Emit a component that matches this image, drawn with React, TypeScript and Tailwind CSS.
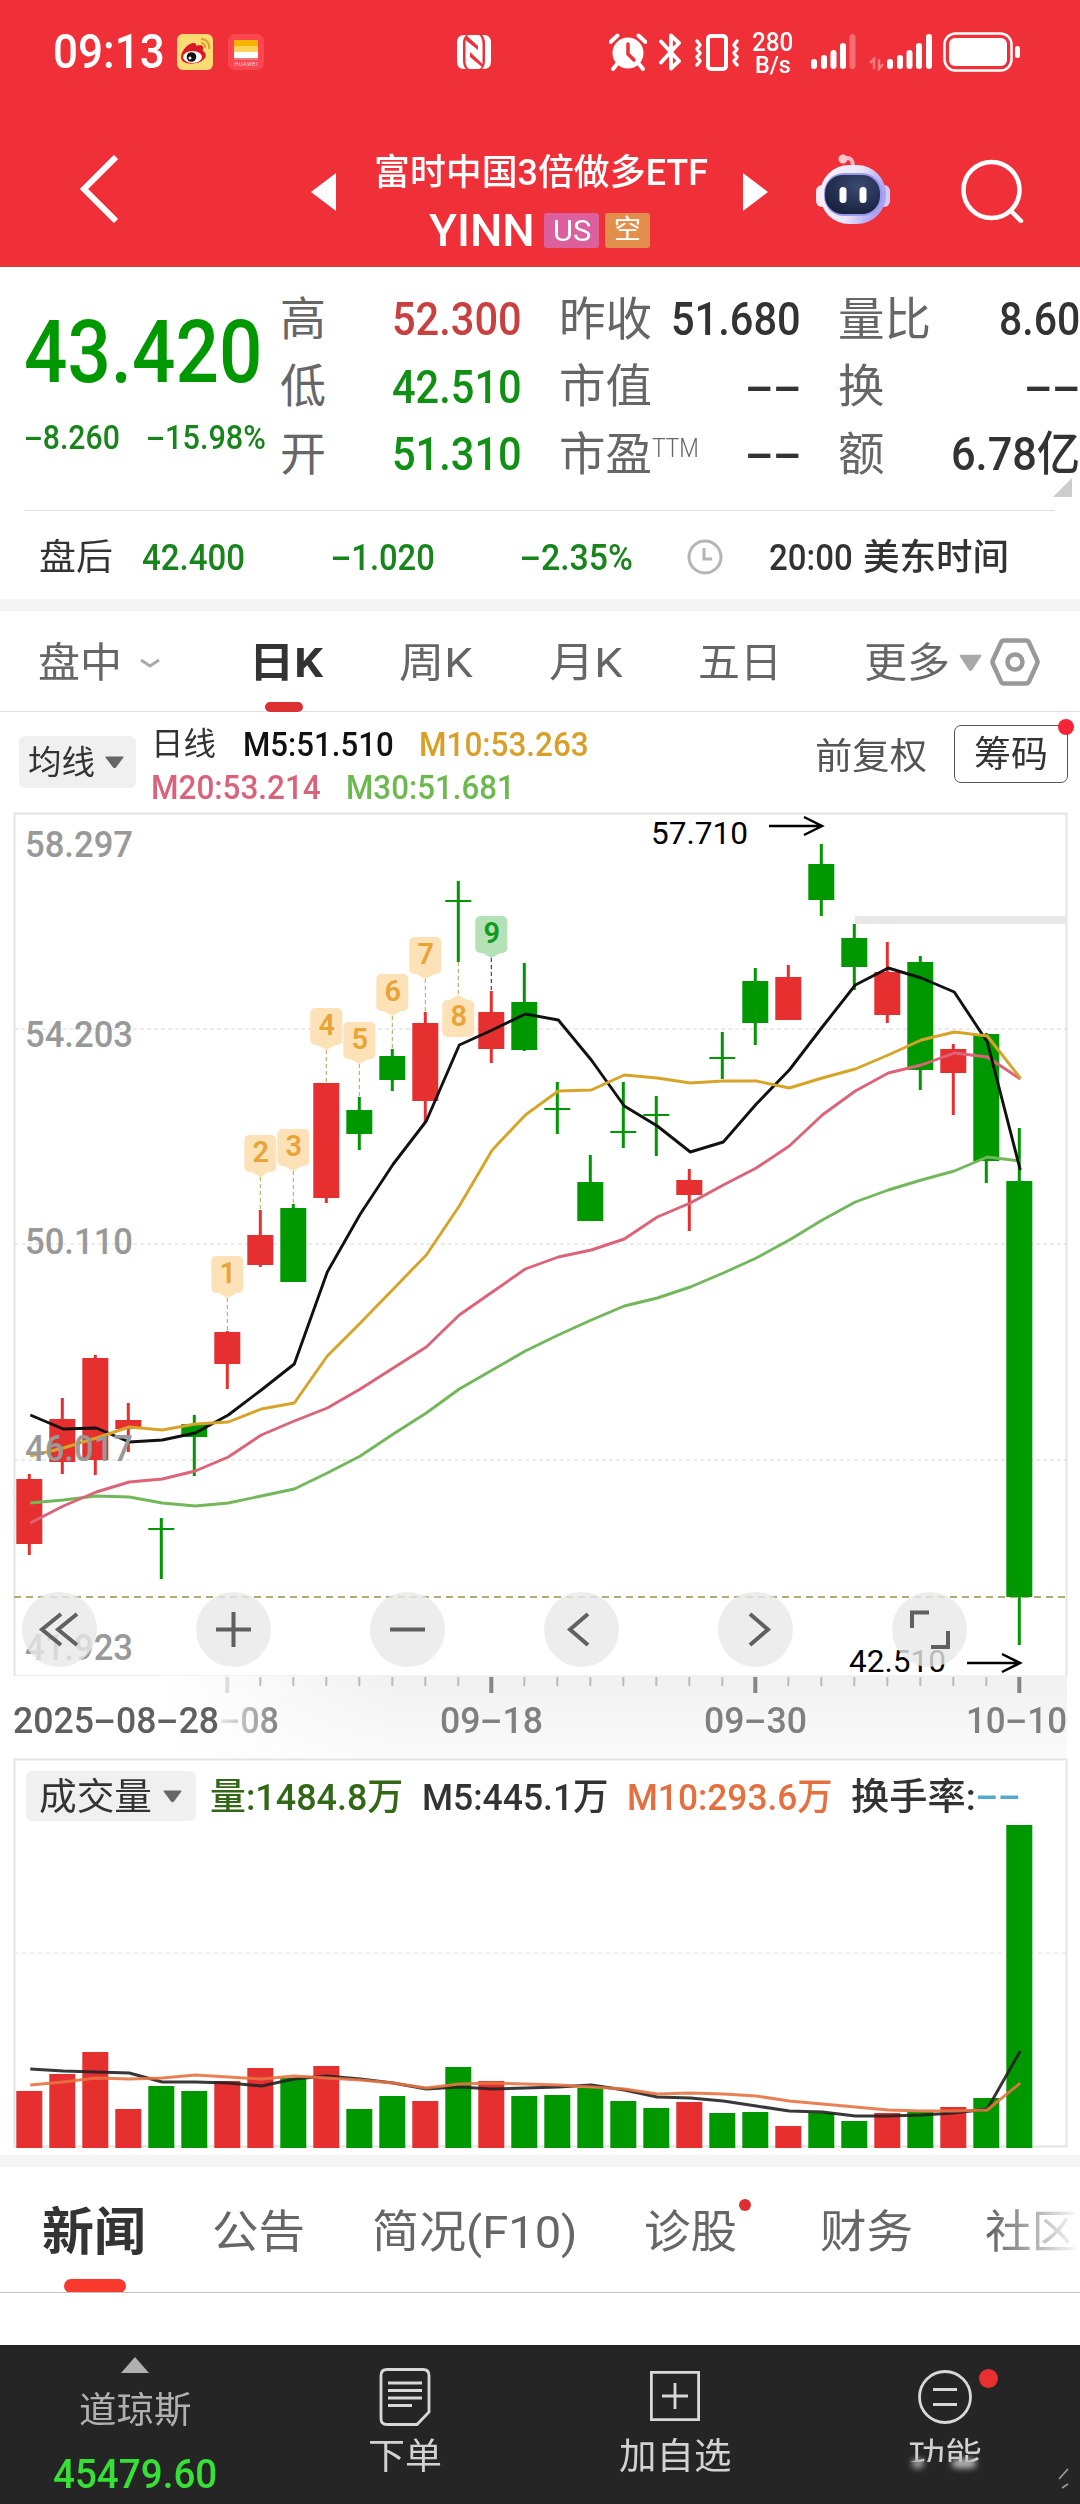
import React, { useLayoutEffect, useRef, useState } from "react";

type Candle = [number, number, number, number, "r" | "g"];

const RED = "#e63030";
const GREEN = "#009800";
const STEP = 33;
const BODY = 26;

// wick top, body top, body bottom, wick bottom (chart space, top of the frame = 0)
const candles: Candle[] = [
  [661, 666, 731, 742, "r"],
  [585, 606, 649, 661, "r"],
  [542, 545, 647, 662, "r"],
  [590, 607, 616, 639, "r"],
  [705, 715, 717, 766, "g"],
  [602, 611, 624, 663, "g"],
  [518, 519, 551, 576, "r"],
  [397, 422, 452, 454, "r"],
  [391, 395, 469, 469, "g"],
  [270, 270, 385, 390, "r"],
  [284, 297, 321, 337, "g"],
  [236, 243, 267, 278, "g"],
  [199, 210, 288, 309, "r"],
  [68, 87, 89, 149, "g"],
  [178, 199, 236, 250, "r"],
  [150, 189, 237, 238, "g"],
  [269, 295, 297, 321, "g"],
  [342, 369, 408, 408, "g"],
  [269, 318, 320, 335, "g"],
  [283, 301, 303, 343, "g"],
  [356, 367, 382, 418, "r"],
  [219, 244, 246, 266, "g"],
  [155, 168, 210, 232, "g"],
  [152, 164, 207, 207, "r"],
  [31, 51, 87, 103, "g"],
  [111, 125, 154, 177, "g"],
  [129, 159, 202, 210, "r"],
  [143, 149, 257, 277, "g"],
  [231, 236, 260, 302, "r"],
  [220, 221, 348, 370, "g"],
  [315, 368, 784, 832, "g"],
];

const ma5 = [602, 616, 615, 629, 627, 620, 602, 577, 551, 459, 401, 351, 308, 232, 217, 201, 207, 247, 293, 313, 339, 329, 291, 257, 214, 172, 155, 165, 179, 229, 357];
const ma10 = [643, 635, 625, 614, 617, 611, 609, 596, 590, 543, 510, 476, 442, 393, 337, 302, 278, 277, 262, 265, 270, 268, 268, 275, 265, 256, 242, 227, 219, 223, 265];
const ma20 = [710, 693, 679, 669, 666, 658, 644, 622, 608, 595, 576, 555, 534, 502, 479, 456, 444, 437, 426, 404, 390, 372, 355, 333, 302, 278, 260, 252, 240, 244, 266];
const ma30 = [690, 687, 683, 684, 690, 693, 690, 683, 676, 660, 643, 621, 600, 576, 557, 538, 522, 507, 493, 485, 474, 460, 445, 427, 407, 389, 377, 367, 358, 344, 348];

const volumes = [57, 74, 96, 39, 62, 57, 67, 80, 70, 82, 39, 52, 47, 81, 67, 52, 53, 60, 47, 40, 46, 35, 36, 22, 35, 27, 35, 36, 41, 50, 323];
const vma5 = [310, 312, 313, 314, 323, 323, 324, 327, 320, 317, 320, 324, 330, 328, 330, 329, 328, 326, 331, 338, 339, 342, 347, 352, 353, 357, 357, 356, 354, 350, 292];
const vma10 = [326, 323, 319, 320, 319, 316, 318, 320, 317, 319, 321, 324, 329, 325, 324, 325, 326, 328, 330, 335, 334, 335, 337, 342, 345, 348, 351, 352, 352, 351, 324];

// candle index, label top
const marks: [number, number][] = [
  [6, 443],
  [7, 322],
  [8, 316],
  [9, 195],
  [10, 209],
  [11, 161],
  [12, 124],
  [13, 182],
  [14, 103],
];

const cx = (i: number) => 15.3 + i * STEP;
const points = (ys: number[]) => ys.map((y, i) => `${cx(i) + 1},${y}`).join(" ");

const withDashes = (text: string) =>
  text.split(/(-)/).map((part, i) =>
    part === "-" ? (
      <span key={i} className="inline-block w-[0.62em] text-center">
        <span className="inline-block scale-x-[1.9]">-</span>
      </span>
    ) : (
      part
    )
  );

interface FitProps {
  text: string;
  w: number;
  className?: string;
}

// squeezes a line of text into a fixed width
const Fit = ({ text, w, className = "" }: FitProps) => {
  const ref = useRef<HTMLSpanElement>(null);
  const [scale, setScale] = useState(1);

  useLayoutEffect(() => {
    if (ref.current) setScale(w / ref.current.offsetWidth);
  }, [w, text]);

  return (
    <span className={`block shrink-0 whitespace-nowrap leading-none ${className}`} style={{ width: w }}>
      <span ref={ref} className="inline-block origin-left" style={{ transform: `scaleX(${scale})` }}>
        {withDashes(text)}
      </span>
    </span>
  );
};

const Caret = ({ className = "" }: { className?: string }) => (
  <svg viewBox="0 0 20 13" className={`shrink-0 ${className}`} preserveAspectRatio="none">
    <path d="M1 0.5H19Q20 1 19 2L11.5 11.5Q10 13 8.500 11.500L1 2Q0 1 1 0.500Z" fill="currentColor" />
  </svg>
);

const StatusBar = () => (
  <div className="flex h-[104px] items-center text-white">
    <Fit text="09:13" w={112} className="ml-[53px] text-[48px] font-medium" />
    <svg viewBox="0 0 36 36" className="ml-[12px] size-[36px]">
      <rect width="36" height="36" rx="6" fill="#fbdc74" />
      <path d="M4 23c0-6 7-14 13-14 3 0 2 3 2 3s6-2 7 1c1 2-1 3 0 4 3 2 4 5 1 8-5 6-23 7-23-2z" fill="#d8191f" />
      <ellipse cx="15.500" cy="23" rx="9.500" ry="6" fill="#fff" />
      <circle cx="14.500" cy="23" r="4.800" fill="#111" />
      <circle cx="13" cy="24" r="1.500" fill="#fff" />
      <path d="M24 5a8 8 0 0 1 8 10M24 9a4 4 0 0 1 4 5" fill="none" stroke="#e0a02c" strokeWidth="2" />
    </svg>
    <svg viewBox="0 0 36 36" className="ml-[15px] size-[36px]">
      <rect width="36" height="36" rx="7" fill="#fb4650" />
      <rect x="6" y="6" width="24" height="6" fill="#f7b500" />
      <rect x="6" y="12" width="24" height="6" fill="#ffd25c" />
      <rect x="6" y="18" width="24" height="6" fill="#fff" />
      <rect x="6" y="24" width="24" height="2" fill="#e27a80" />
      <text x="6.500" y="32" fontSize="5.500" textLength="23" fill="#ffd9db">HUAWEI</text>
    </svg>
    <svg viewBox="0 0 34 34" className="ml-[193px] size-[34px]" fill="#fff">
      <path d="M9 0H7Q0 0 0 8V26Q0 34 7 34H9Q6 31 6 26V8Q6 3 9 0Z" />
      <path d="M25 34H27Q34 34 34 26V8Q34 0 27 0H25Q28 3 28 8V26Q28 31 25 34Z" />
      <path d="M8.500 5V27Q9 32 12 34H22Q24 33 25 32L13 22V17L25.500 29V8Q25 2 22 0H12Q11 0 10 1L21 11V15Z" />
    </svg>
    <svg viewBox="0 0 38 38" className="ml-[118px] size-[38px]">
      <circle cx="19" cy="20" r="15.500" fill="#fff" />
      <path d="M1.500 9L8.500 2.500M36.500 9L29.500 2.500M8 31L4 36M30 31L34 36" stroke="#fff" strokeWidth="4" strokeLinecap="round" />
      <path d="M19 11V21L25 27" fill="none" stroke="#f03038" strokeWidth="3.500" strokeLinecap="round" />
    </svg>
    <svg viewBox="0 0 22 38" className="ml-[12px] h-[38px] w-[22px]" fill="none" stroke="#fff" strokeWidth="3.800" strokeLinejoin="round" strokeLinecap="round">
      <path d="M2 8.500L20 28L12 35.500V2.500L20 10L2 29.500" />
    </svg>
    <svg viewBox="0 0 46 38" className="ml-[13px] h-[38px] w-[46px]" fill="none" stroke="#fff" strokeWidth="4" strokeLinecap="round" strokeLinejoin="round">
      <rect x="14" y="3" width="18" height="33" rx="3" />
      <path d="M3 8L6 12L3 16L6 20L3 24L6 28L3 32M43 8L40 12L43 16L40 20L43 24L40 28L43 32" strokeWidth="3.500" />
    </svg>
    <div className="ml-[12px] flex flex-col items-center gap-px font-medium">
      <Fit text="280" w={41} className="h-[23px] text-[26px] leading-[23px]" />
      <Fit text="B/s" w={36} className="h-[22px] text-[24px] leading-[22px]" />
    </div>
    <svg viewBox="0 0 46 38" className="ml-[18px] h-[38px] w-[46px]" stroke="#fff" strokeWidth="6" strokeLinecap="round">
      <path d="M3 29V33M13 25V33M22.500 20V33M32 13V33" />
      <path d="M41.500 4V33" opacity=".3" />
    </svg>
    <svg viewBox="0 0 66 38" className="ml-[11px] h-[38px] w-[66px]" stroke="#fff" strokeWidth="6" strokeLinecap="round">
      <path d="M2 30L6 26V36M11 26V36L15 31" fill="none" strokeWidth="2.500" strokeLinecap="butt" opacity=".35" />
      <path d="M22 29V33M32 25V33M41.500 20V33M51 13V33M61 4V33" />
    </svg>
    <svg viewBox="0 0 78 42" className="ml-[9px] h-[42px] w-[78px]">
      <rect x="1.500" y="2.500" width="67" height="37" rx="11" fill="none" stroke="#fff" strokeWidth="2.500" />
      <rect x="6" y="7" width="58" height="28" rx="6" fill="#fff" />
      <rect x="72" y="15" width="5" height="12" rx="2.500" fill="#fff" />
    </svg>
  </div>
);

const TitleBar = () => (
  <div className="flex h-[163px] items-center text-white">
    <svg viewBox="0 0 40 68" className="ml-[78px] mt-[6px] h-[68px] w-[40px]" fill="none" stroke="#fff" strokeWidth="6">
      <path d="M38 2L6 34L38 66" />
    </svg>
    <svg viewBox="0 0 25 38" className="ml-[193px] mt-[13px] h-[38px] w-[25px]" fill="#fff">
      <path d="M25 0V38L0 19Z" />
    </svg>
    <div className="ml-[37px] mt-[36px] flex w-[336px] flex-col items-center gap-[18px]">
      <Fit text="富时中国3倍做多ETF" w={334} className="text-[36px] font-medium" />
      <div className="-ml-[3px] flex items-center gap-[6px]">
        <Fit text="YINN" w={106} className="mr-[3px] text-[44px] font-medium" />
        <div className="flex h-[35px] w-[55px] items-center justify-center rounded-[3px] bg-[#dc5f9e]">
          <Fit text="US" w={38} className="text-[30px]" />
        </div>
        <div className="flex h-[35px] w-[45px] items-center justify-center rounded-[3px] bg-[#e28f4c] text-[27px] leading-none">
          空
        </div>
      </div>
    </div>
    <svg viewBox="0 0 25 38" className="ml-[34px] mt-[13px] h-[38px] w-[25px]" fill="#fff">
      <path d="M0 0V38L25 19Z" />
    </svg>
    <svg viewBox="0 0 76 72" className="ml-[47px] mt-[7px] h-[72px] w-[76px]">
      <defs>
        <linearGradient id="shell" x1="0" y1="0" x2="1" y2="0.3">
          <stop offset="0" stopColor="#fdf1f6" />
          <stop offset="0.600" stopColor="#e9e6fb" />
          <stop offset="1" stopColor="#a9a2f0" />
        </linearGradient>
        <radialGradient id="visor" cx="0.6" cy="0.3" r="0.7">
          <stop offset="0" stopColor="#3c4a72" />
          <stop offset="1" stopColor="#18233f" />
        </radialGradient>
      </defs>
      <path d="M28 6Q38 2 38 14" fill="none" stroke="#f7b5c4" strokeWidth="4" />
      <circle cx="28" cy="6" r="4.500" fill="#f9c6d0" />
      <rect x="1" y="32" width="12" height="22" rx="6" fill="#fbe9f0" />
      <rect x="63" y="32" width="12" height="22" rx="6" fill="#cfcdf8" />
      <rect x="5" y="12" width="66" height="59" rx="29" fill="url(#shell)" />
      <rect x="9" y="20" width="58" height="43" rx="20" fill="#9a98ee" />
      <rect x="10" y="22" width="55" height="39" rx="18" fill="url(#visor)" />
      <rect x="24.500" y="34" width="7" height="16" rx="3.500" fill="#fff" />
      <rect x="44.500" y="34" width="7" height="16" rx="3.500" fill="#fff" />
    </svg>
    <svg viewBox="0 0 64 64" className="ml-[70px] mt-[11px] size-[64px]" fill="none" stroke="#fff" strokeWidth="4.500" strokeLinecap="round">
      <circle cx="30.500" cy="31" r="28" />
      <path d="M50 52L60 62" />
    </svg>
  </div>
);

const quoteRows = [
  { a: "高", av: "52.300", up: true, b: "昨收", bv: "51.680", c: "量比", cv: "8.60", cw: 81 },
  { a: "低", av: "42.510", up: false, b: "市值", bv: "--", c: "换", cv: "--", cw: 56 },
  { a: "开", av: "51.310", up: false, b: "市盈", bv: "--", c: "额", cv: "6.78亿", cw: 129 },
];

const Quote = () => (
  <div className="relative flex h-[244px] text-[#333]">
    <div className="w-[280px] shrink-0 pl-[24px] text-[#009800]">
      <Fit text="43.420" w={238} className="mt-[42px] text-[87px] font-medium" />
      <div className="mt-[24px] flex text-[34px] text-[#17851b]">
        <Fit text="-8.260" w={96} className="font-medium" />
        <Fit text="-15.98%" w={120} className="ml-[26px] font-medium" />
      </div>
    </div>
    <div className="mt-[18px] flex w-[800px] flex-col">
      {quoteRows.map((row) => (
        <div key={row.a} className="flex h-[67.5px] items-center text-[47px]">
          <span className="w-[112px] shrink-0 text-[46px] leading-none text-[#666]">{row.a}</span>
          <Fit
            text={row.av}
            w={130}
            className={row.up ? "text-[#c84040] font-medium" : "text-[#109015] font-medium"}
          />
          <div className="ml-[37px] flex w-[145px] shrink-0 items-center">
            <Fit text={row.b} w={93} className="text-[46px] text-[#666]" />
            {row.b === "市盈" && <Fit text="TTM" w={47} className="-mt-[11px] text-[25px] font-light text-[#666]" />}
          </div>
          <div className="-ml-[33px] flex w-[130px] shrink-0 justify-end">
            <Fit text={row.bv} w={row.bv === "--" ? 56 : 130} className="font-medium" />
          </div>
          <Fit text={row.c} w={row.c.length * 46.5} className="ml-[37px] text-[46px] text-[#666]" />
          <div className="ml-auto flex w-[140px] justify-end">
            <Fit text={row.cv} w={row.cw} className="font-medium" />
          </div>
        </div>
      ))}
    </div>
    <svg viewBox="0 0 19 19" className="absolute bottom-[14px] right-[8px] size-[19px]" fill="#ccc">
      <path d="M19 0V19H0Z" />
    </svg>
    <div className="absolute bottom-0 left-[24px] h-px w-[1031px] bg-[#e2e2e2]" />
  </div>
);

const AfterHours = () => (
  <div className="flex h-[88px] items-center pt-[6px] text-[36.5px] text-[#17851b]">
    <Fit text="盘后" w={74} className="ml-[39px] text-[36px] text-[#333]" />
    <Fit text="42.400" w={103} className="ml-[29px] font-medium" />
    <Fit text="-1.020" w={104} className="ml-[86px] font-medium" />
    <Fit text="-2.35%" w={113} className="ml-[85px] font-medium" />
    <svg viewBox="0 0 36 36" className="ml-[54px] -mt-[3px] size-[36px]" fill="none" stroke="#b5b5b5" strokeWidth="3">
      <circle cx="18" cy="18" r="16" />
      <path d="M17 9V20H25" />
    </svg>
    <Fit text="20:00" w={84} className="ml-[46px] font-medium text-[#333]" />
    <Fit text="美东时间" w={146} className="ml-[10px] text-[36px] font-medium text-[#333]" />
  </div>
);

const PeriodTabs = () => (
  <div className="relative flex h-[101px] items-center border-b border-[#e0e0e0] pt-[4px] text-[41px] text-[#666]">
    <Fit text="盘中" w={84} className="ml-[38px]" />
    <svg viewBox="0 0 20 11" className="ml-[18px] h-[11px] w-[20px]" fill="none" stroke="#aaa" strokeWidth="3">
      <path d="M1 2L10 8L19 2" />
    </svg>
    <Fit text="日K" w={74} className="ml-[89px] font-bold text-[#333]" />
    <Fit text="周K" w={74} className="ml-[76px]" />
    <Fit text="月K" w={74} className="ml-[76px]" />
    <Fit text="五日" w={84} className="ml-[75px]" />
    <Fit text="更多" w={86} className="ml-[82px]" />
    <Caret className="ml-[9px] h-[18px] w-[23px] text-[#a9a9a9]" />
    <svg viewBox="0 0 50 48" className="ml-[8px] -mt-[3px] h-[48px] w-[50px]" fill="none" stroke="#999" strokeWidth="4.500" strokeLinejoin="round">
      <path d="M14 2.500H36Q38 2.500 39 4.500L47 22Q48 24 47 26L39 43.500Q38 45.500 36 45.500H14Q12 45.500 11 43.500L3 26Q2 24 3 22L11 4.500Q12 2.500 14 2.500Z" />
      <circle cx="25" cy="24" r="7.500" />
    </svg>
    <div className="absolute bottom-[-1px] left-[265px] h-[10px] w-[38px] rounded-full bg-[#dc3030]" />
  </div>
);

const Averages = () => (
  <div className="flex h-[101px]">
    <div className="ml-[19px] mt-[24px] flex h-[52px] w-[117px] items-center rounded-[6px] bg-[#f0f0f0] text-[33px] text-[#333]">
      <Fit text="均线" w={67} className="ml-[9px]" />
      <Caret className="ml-[10px] h-[13px] w-[19px] text-[#666]" />
    </div>
    <div className="ml-[15px] mt-[16px] w-[640px] text-[33.5px]">
      <div className="flex">
        <Fit text="日线" w={65} className="text-[32px] text-[#333]" />
        <Fit text="M5:51.510" w={151} className="ml-[27px] font-medium text-[#111]" />
        <Fit text="M10:53.263" w={170} className="ml-[25px] font-medium text-[#d99f26]" />
      </div>
      <div className="mt-[9px] flex">
        <Fit text="M20:53.214" w={170} className="font-medium text-[#d9637a]" />
        <Fit text="M30:51.681" w={169} className="ml-[25px] font-medium text-[#6cb94f]" />
      </div>
    </div>
    <Fit text="前复权" w={112} className="ml-[24px] mt-[27px] text-[36px] text-[#555]" />
    <div className="relative ml-[27px] mt-[13px] flex h-[58px] w-[114px] items-center justify-center rounded-[7px] border border-[#555] text-[36px] text-[#333]">
      <Fit text="筹码" w={74} className="mt-[2px]" />
      <span className="absolute -right-[7px] -top-[7px] size-[16px] rounded-full bg-[#f52439]" />
    </div>
  </div>
);

const Arrow = ({ x, y }: { x: number; y: number }) => (
  <path d={`M${x} ${y}H${x + 52}M${x + 35} ${y - 9}L${x + 53} ${y}L${x + 35} ${y + 9}`} fill="none" stroke="#000" strokeWidth="2.5" />
);

const controls = [
  "M39 22L20 37.500L39 53M55 22L36 37.500L55 53",
  "M37.500 20V55M20 37.500H55",
  "M20 37.500H55",
  "M44 22L26 37.500L44 53",
  "M32 22L50 37.500L32 53",
  "M20 36V20.500H37M56 39V55H39",
];

const KChart = () => (
  <div className="relative ml-[14px] h-[863px] w-[1053px]">
    <svg viewBox="0 0 1053 863" className="h-full w-full overflow-visible">
      <rect x="0.500" y="0.500" width="1052" height="863" fill="none" stroke="#e4e4e4" strokeWidth="2" />
      {[216, 431, 647].map((y) => (
        <path key={y} d={`M0 ${y}H1053`} stroke="#d8d8d8" strokeWidth="1" strokeDasharray="4 3" />
      ))}
      <path d="M0 784H1053" stroke="#b3aa78" strokeWidth="2" strokeDasharray="7 5" />
      <rect x="841" y="103" width="212" height="8" fill="#e8e8e8" />

      {candles.map(([wt, bt, bb, wb, tone], i) => {
        const fill = tone === "r" ? RED : GREEN;
        return (
          <g key={i} fill={fill}>
            <rect x={cx(i) - 1.5} y={wt} width="3" height={wb - wt} />
            <rect x={cx(i) - BODY / 2} y={bt} width={BODY} height={bb - bt} />
          </g>
        );
      })}

      <g fill="none" strokeWidth="2.900" strokeLinejoin="round">
        <polyline points={points(ma30)} stroke="#72b85a" />
        <polyline points={points(ma20)} stroke="#dc6378" />
        <polyline points={points(ma5)} stroke="#111" />
        <polyline points={points(ma10)} stroke="#d8a428" />
      </g>

      {marks.map(([i, top], n) => {
        const x = cx(i);
        const last = n === 8;
        const flipped = n === 7;
        const tone = last ? "#109a20" : "#e8a437";
        return (
          <g key={i}>
            <path
              d={flipped ? `M${x} ${candles[i][3]}V${top}` : `M${x} ${top + 42}V${candles[i][0]}`}
              stroke={last ? "#222" : "#b8a050"}
              strokeDasharray="4 3"
            />
            <g fill={last ? "#b4e1b6" : "#fde2b8"}>
              <rect x={x - 16} y={flipped ? top + 5 : top} width="32" height="37" rx="5" />
              <path d={flipped ? `M${x - 9} ${top + 5}L${x} ${top}L${x + 9} ${top + 5}Z` : `M${x - 9} ${top + 37}L${x} ${top + 42}L${x + 9} ${top + 37}Z`} />
            </g>
            <text x={x + 0.5} y={flipped ? top + 31 : top + 27} textAnchor="middle" fontSize="29" fontWeight="600" fill={tone}>
              {n + 1}
            </text>
          </g>
        );
      })}

      <g fontSize="37" fontWeight="500" fill="#999">
        <text x="11" y="43.500" textLength="108" lengthAdjust="spacingAndGlyphs">58.297</text>
        <text x="11" y="234" textLength="108" lengthAdjust="spacingAndGlyphs">54.203</text>
        <text x="11" y="441" textLength="108" lengthAdjust="spacingAndGlyphs">50.110</text>
        <text x="11" y="648" textLength="108" lengthAdjust="spacingAndGlyphs">46.017</text>
        <text x="11" y="847" textLength="108" lengthAdjust="spacingAndGlyphs">41.923</text>
      </g>
      <g fontSize="31" fill="#000">
        <text x="637" y="31" textLength="97" lengthAdjust="spacingAndGlyphs">57.710</text>
        <text x="835" y="859" textLength="97" lengthAdjust="spacingAndGlyphs">42.510</text>
      </g>
      <Arrow x={755} y={13} />
      <Arrow x={953} y={850} />
    </svg>
    <div className="absolute bottom-[9px] left-[8px] flex gap-[99px]">
      {controls.map((d) => (
        <button key={d} className="size-[75px] rounded-full bg-[#e9e9e9]/80">
          <svg viewBox="0 0 75 75" fill="none" stroke="#606060" strokeWidth="4">
            <path d={d} />
          </svg>
        </button>
      ))}
    </div>
  </div>
);

const TimeAxis = () => (
  <div className="relative h-[83px] bg-linear-to-b from-[#f1f1f1] to-[#fbfbfb]">
    <div className="absolute inset-y-0 left-0 w-[400px] bg-linear-to-r from-white from-40% to-transparent" />
    <div className="absolute inset-y-0 right-0 w-[13px] bg-white" />
    <svg viewBox="0 0 1080 20" className="relative block h-[20px] w-full">
      {candles.map((_, i) => {
        if (i < 6) return null;
        const major = (i - 6) % 8 === 0;
        return (
          <rect
            key={i}
            x={cx(i) + 14 - (major ? 2 : 1)}
            y="1"
            width={major ? 4 : 2}
            height={major ? 16 : 9}
            fill={i === 6 ? "#ddd" : major ? "#858585" : "#bbb"}
          />
        );
      })}
    </svg>
    <div className="relative mt-[6px] flex text-[37px] font-medium text-[#808080]">
      <Fit text="2025-08-28" w={206} className="ml-[13px] text-[#606060]" />
      <Fit text="-08" w={60} className="mask-[linear-gradient(to_right,rgba(0,0,0,0.15),black)]" />
      <Fit text="09-18" w={103} className="ml-[161px]" />
      <Fit text="09-30" w={103} className="ml-[161px]" />
      <Fit text="10-10" w={101} className="ml-[159px]" />
    </div>
  </div>
);

const Volume = () => (
  <div className="relative ml-[14px] h-[389px] w-[1053px]">
    <svg viewBox="0 0 1053 389" className="absolute inset-0 h-full w-full overflow-visible">
      <rect x="0.500" y="0.500" width="1052" height="387" fill="none" stroke="#e4e4e4" strokeWidth="2" />
      <path d="M0 194H1053" stroke="#e2e2e2" strokeDasharray="4 4" />
      {volumes.map((v, i) => (
        <rect key={i} x={cx(i) - BODY / 2} y={389 - v} width={BODY} height={v} fill={candles[i][4] === "r" ? RED : GREEN} />
      ))}
      <g fill="none" strokeWidth="3" strokeLinejoin="round">
        <polyline points={points(vma5)} stroke="#222" strokeOpacity=".9" />
        <polyline points={points(vma10)} stroke="#e87343" strokeOpacity=".9" />
      </g>
    </svg>
    <div className="relative flex items-center pt-[12px] text-[37px] text-[#333]">
      <div className="ml-[12px] flex h-[50px] w-[170px] items-center rounded-[6px] bg-[#f0f0f0]">
        <Fit text="成交量" w={113} className="ml-[13px] mt-[3px]" />
        <Caret className="ml-[11px] h-[13px] w-[19px] text-[#666]" />
      </div>
      <Fit text="量:1484.8万" w={193} className="ml-[14px] mt-[2px] font-medium text-[#316715]" />
      <Fit text="M5:445.1万" w={187} className="ml-[19px] mt-[2px] font-medium" />
      <Fit text="M10:293.6万" w={206} className="ml-[18px] mt-[2px] font-medium text-[#e5703f]" />
      <Fit text="换手率:" w={125} className="ml-[18px] mt-[2px] font-medium" />
      <Fit text="--" w={45} className="font-medium text-[#52abcf]" />
    </div>
  </div>
);

const NewsTabs = () => (
  <div className="relative flex h-[126px] items-center overflow-hidden border-b border-[#c4c4c4] pt-[5px] text-[45px] text-[#666]">
    <Fit text="新闻" w={104} className="ml-[42px] text-[51px] font-bold text-[#333]" />
    <Fit text="公告" w={93} className="ml-[66px]" />
    <Fit text="简况(F10)" w={206} className="ml-[67px]" />
    <Fit text="诊股" w={93} className="ml-[66px]" />
    <Fit text="财务" w={93} className="ml-[83px]" />
    <Fit text="社区" w={93} className="ml-[72px]" />
    <span className="absolute left-[739px] top-[32px] size-[12px] rounded-full bg-[#dc3030]" />
    <div className="absolute bottom-[-1px] left-[64px] h-[14px] w-[62px] rounded-full bg-[#f9392d]" />
    <div className="absolute inset-y-0 right-0 w-[90px] bg-linear-to-r from-white/0 to-white" />
  </div>
);

const BottomBar = () => (
  <div className="grid h-[159px] grid-cols-4 bg-[#252525] text-[36.5px] leading-none text-[#d2d2d2]">
    <div className="flex flex-col items-center">
      <svg viewBox="0 0 28 16" className="mt-[12px] h-[16px] w-[28px]" fill="#b0b0b0">
        <path d="M14 0L28 16H0Z" />
      </svg>
      <Fit text="道琼斯" w={113} className="mt-[20px] text-[#b0b0b0]" />
      <Fit text="45479.60" w={164} className="mt-[25px] text-[40px] font-medium text-[#37e037]" />
    </div>
    <div className="flex flex-col items-center">
      <svg viewBox="0 0 52 58" className="mt-[23px] h-[58px] w-[52px]" fill="none" stroke="#d8d8d8" strokeWidth="2.800">
        <path d="M8 1.500H44Q50 1.500 50 7.500V44L38 56.500H8Q2 56.500 2 50.500V7.500Q2 1.500 8 1.500Z" />
        <path d="M9 15H43M9 22.500H43M9 30H43M9 37.500H33" />
      </svg>
      <Fit text="下单" w={74} className="mt-[13px]" />
    </div>
    <div className="flex flex-col items-center">
      <svg viewBox="0 0 50 50" className="mb-[4px] mt-[26px] size-[50px]" fill="none" stroke="#d8d8d8" strokeWidth="2.800">
        <path d="M1.400 1.400H48.600V48.600H1.400ZM25 12V38M12 25H38" />
      </svg>
      <Fit text="加自选" w={113} className="mt-[14px]" />
    </div>
    <div className="relative flex flex-col items-center">
      <svg viewBox="0 0 54 54" className="mt-[25px] size-[54px]" fill="none" stroke="#d8d8d8" strokeWidth="2.800">
        <circle cx="27" cy="27" r="25.500" />
        <path d="M15 19.500H39M15 34.500H39" />
      </svg>
      <Fit text="功能" w={74} className="mt-[15px]" />
      <span className="absolute right-[82px] top-[24px] size-[19px] rounded-full bg-[#e93030]" />
      <div className="absolute bottom-0 right-[60px] h-[42px] w-[150px] bg-[#252525]" />
      <div className="absolute bottom-[36px] left-[102px] h-[9px] w-[12px] rounded-full bg-[#aaa] blur-[3px]" />
      <div className="absolute bottom-[36px] left-[142px] h-[9px] w-[24px] rounded-full bg-[#bbb] blur-[3px]" />
      <svg viewBox="0 0 14 24" className="absolute bottom-[13px] right-[10px] h-[24px] w-[14px]" fill="none" stroke="#999" strokeWidth="1.800">
        <path d="M12 2L3 12M6 21L12 17" />
      </svg>
    </div>
  </div>
);

const App = () => (
  <main className="h-[2504px] w-[1080px] overflow-hidden bg-white font-[Roboto,'Noto_Sans_CJK_SC',sans-serif]">
    <header className="bg-[#f03038]">
      <StatusBar />
      <TitleBar />
    </header>
    <Quote />
    <AfterHours />
    <div className="h-[12px] bg-[#f4f4f4]" />
    <PeriodTabs />
    <Averages />
    <KChart />
    <TimeAxis />
    <Volume />
    <div className="mt-[7px] h-[12px] bg-[#f4f4f4]" />
    <NewsTabs />
    <div className="h-[52px]" />
    <BottomBar />
  </main>
);

export default App;
